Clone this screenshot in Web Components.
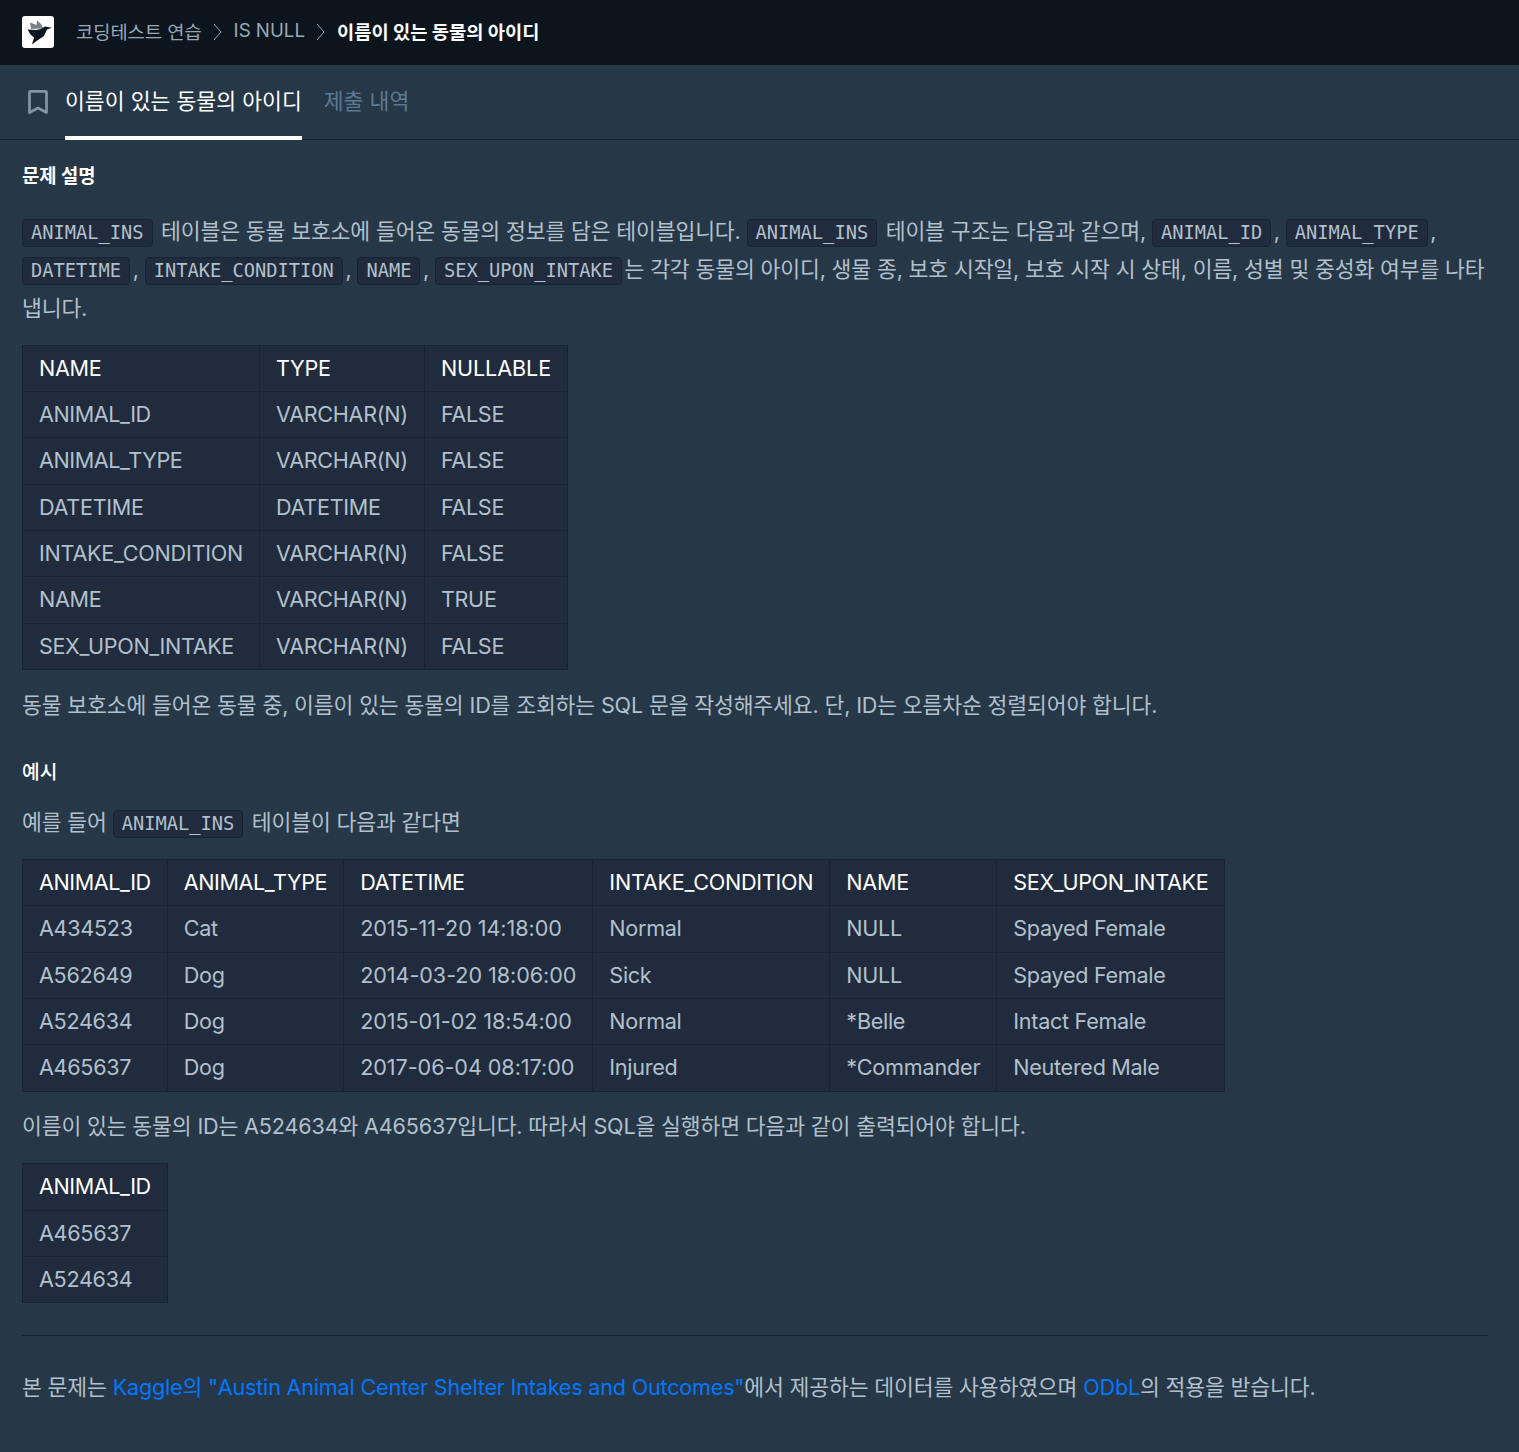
<!DOCTYPE html>
<html lang="ko">
<head>
<meta charset="utf-8">
<title>이름이 있는 동물의 아이디</title>
<style>
html, body { margin: 0; background: #263747; }
body { font-family: Inter, "Noto Sans CJK KR", sans-serif; color: #B2C0CC; }
</style>
</head>
<body>

<top-nav>
    <nav-crumb>코딩테스트 연습</nav-crumb>
    <nav-crumb>IS NULL</nav-crumb>
    <nav-crumb current>이름이 있는 동물의 아이디</nav-crumb>
</top-nav>

<tab-bar>
    <tab-item active>이름이 있는 동물의 아이디</tab-item>
    <tab-item>제출 내역</tab-item>
</tab-bar>

<guide-section>
    <section-title big>문제 설명</section-title>
    <text-para><code-chip>ANIMAL_INS</code-chip> 테이블은 동물 보호소에 들어온 동물의 정보를 담은 테이블입니다. <code-chip>ANIMAL_INS</code-chip> 테이블 구조는 다음과 같으며, <code-chip>ANIMAL_ID</code-chip>, <code-chip>ANIMAL_TYPE</code-chip>, <code-chip>DATETIME</code-chip>, <code-chip>INTAKE_CONDITION</code-chip>, <code-chip>NAME</code-chip>, <code-chip>SEX_UPON_INTAKE</code-chip>는 각각 동물의 아이디, 생물 종, 보호 시작일, 보호 시작 시 상태, 이름, 성별 및 중성화 여부를 나타<br>냅니다.</text-para>
    <data-table rows='[["NAME","TYPE","NULLABLE"],["ANIMAL_ID","VARCHAR(N)","FALSE"],["ANIMAL_TYPE","VARCHAR(N)","FALSE"],["DATETIME","DATETIME","FALSE"],["INTAKE_CONDITION","VARCHAR(N)","FALSE"],["NAME","VARCHAR(N)","TRUE"],["SEX_UPON_INTAKE","VARCHAR(N)","FALSE"]]'></data-table>
    <text-para>동물 보호소에 들어온 동물 중, 이름이 있는 동물의 ID를 조회하는 SQL 문을 작성해주세요. 단, ID는 오름차순 정렬되어야 합니다.</text-para>
    <section-title>예시</section-title>
    <text-para>예를 들어 <code-chip>ANIMAL_INS</code-chip> 테이블이 다음과 같다면</text-para>
    <data-table rows='[["ANIMAL_ID","ANIMAL_TYPE","DATETIME","INTAKE_CONDITION","NAME","SEX_UPON_INTAKE"],["A434523","Cat","2015-11-20 14:18:00","Normal","NULL","Spayed Female"],["A562649","Dog","2014-03-20 18:06:00","Sick","NULL","Spayed Female"],["A524634","Dog","2015-01-02 18:54:00","Normal","*Belle","Intact Female"],["A465637","Dog","2017-06-04 08:17:00","Injured","*Commander","Neutered Male"]]'></data-table>
    <text-para>이름이 있는 동물의 ID는 A524634와 A465637입니다. 따라서 SQL을 실행하면 다음과 같이 출력되어야 합니다.</text-para>
    <data-table rows='[["ANIMAL_ID"],["A465637"],["A524634"]]'></data-table>
    <section-rule></section-rule>
    <text-para>본 문제는 <ext-link>Kaggle의 "Austin Animal Center Shelter Intakes and Outcomes"</ext-link>에서 제공하는 데이터를 사용하였으며 <ext-link>ODbL</ext-link>의 적용을 받습니다.</text-para>
</guide-section>

<script>
'use strict';

const define = (name, css, html) => {
    customElements.define(name, class extends HTMLElement {
        constructor () {
            super();
            this.attachShadow({mode: 'open'}).innerHTML = `<style>${css}</style>${html}`;
        }
    });
};

define('top-nav', `
    :host { display: flex; align-items: center; height: 65px; padding: 0 22px 5px; background: #0C151C; box-sizing: border-box; }
    svg { flex: none; margin-right: 22px; margin-top: 3px; }
`, `
    <svg width="32" height="32" viewBox="0 0 32 32">
        <rect width="32" height="32" rx="3" fill="#fff"/>
        <path fill="#77818b" d="M8 6.500 L14.500 9 L15 4.500 L19 8 L21.500 12.500 L9 13 Z"/>
        <path fill="#0C151C" d="M5.500 13.500 L14 14 L19 13 L23 10.500 L30 11.800 L25 13.500 L22 20 L16 24 L10 28.500 L12 21.500 L8.500 18.500 Z"/>
    </svg>
    <slot></slot>
`);

define('nav-crumb', `
    :host { display: inline-flex; align-items: center; font-size: 18.7px; color: #98A8B9; }
    :host([current]) { color: #fff; font-weight: 700; }
    svg { margin: 3px 12px 0 11px; }
    :host([current]) svg { display: none; }
`, `<slot></slot><svg width="9" height="18" viewBox="0 0 9 18"><path d="M1 1 L8 9 L1 17" fill="none" stroke="#98A8B9" stroke-width="1"/></svg>`);

define('tab-bar', `
    :host { display: flex; align-items: stretch; height: 75px; padding-left: 28px; box-sizing: border-box; border-bottom: 1px solid #172334; gap: 22px; }
    svg { flex: none; align-self: center; margin: 0 -5px 1px 0; width: 20px; height: 24px; }
`, `
    <svg viewBox="0 0 20 24"><path d="M1.500 2.500 Q1.500 1.400 2.600 1.400 H17.400 Q18.500 1.400 18.500 2.500 V22.500 L10 18 L1.500 22.500 Z" fill="none" stroke="#8395A7" stroke-width="2.700" stroke-linejoin="round"/></svg>
    <slot></slot>
`);

define('tab-item', `
    :host { display: flex; align-items: center; font-size: 21.6px; color: #5C7A93; box-sizing: border-box; height: 75px; padding-bottom: 2px; border-bottom: 4px solid transparent; }
    :host([active]) { color: #fff; border-bottom-color: #fff; }
`, `<slot></slot>`);

define('guide-section', `
    :host { display: block; padding: 22.6px 31px 47px 22px; }
`, `<slot></slot>`);

define('section-title', `
    :host { display: block; font-size: 19.200px; font-weight: 500; color: #fff; line-height: 28px; margin: 33.9px 0 17px; }
    :host([big]) { margin-top: 0; margin-bottom: 21.1px; font-size: 18.8px; font-weight: 700; }
`, `<slot></slot>`);

define('text-para', `
    :host { display: block; font-size: 21.6px; line-height: 38.4px; letter-spacing: -0.16px; margin: 0 0 17.8px; }
`, `<slot></slot>`);

define('code-chip', `
    :host { display: inline-block; font-family: "DejaVu Sans Mono", monospace; font-size: 18.72px; letter-spacing: 0; line-height: 26px; color: #B2C0CC; background: #202B3D; border: 1px solid #172334; border-radius: 4px; padding: 0 8px; margin-right: 2.6px; vertical-align: baseline; }
`, `<slot></slot>`);

define('ext-link', `
    :host { color: #0078FF; letter-spacing: -0.2px; }
`, `<slot></slot>`);

define('section-rule', `
    :host { display: block; border-top: 1px solid #172334; margin: 32px 0 31.6px; }
`, ``);

// a few words run wider or narrower than the default tracking
const tracking = text => {
    if (/^\d{4}-/.test(text)) return -0.06;
    if (text === 'NULLABLE') return -0.1;
    if (text === '*Commander') return -0.2;
    if (text === 'INTAKE_CONDITION') return -0.25;
    if (text === 'SEX_UPON_INTAKE') return -0.36;
    if (/^ANIMAL_/.test(text)) return -0.42;
    return -0.3;
};

customElements.define('data-table', class extends HTMLElement {
    constructor () {
        super();
        this.attachShadow({mode: 'open'});
    }
    connectedCallback () {
        const rows = JSON.parse(this.getAttribute('rows'));
        const body = rows.map((row, i) => {
            const tag = i ? 'td' : 'th';
            return `<tr>${row.map(c => `<${tag} style="letter-spacing:${tracking(c)}px">${c}</${tag}>`).join('')}</tr>`;
        }).join('');
        this.shadowRoot.innerHTML = `<style>
            :host { display: block; margin: 0 0 15.5px; }
            table { border-collapse: collapse; background: #202B3D; font-size: 21.6px; line-height: 29.33px; }
            th, td { border: 1px solid #172334; padding: 8px 16px; text-align: left; font-weight: 400; white-space: nowrap; }
            th { color: #fff; }
        </style><table>${body}</table>`;
    }
});
</script>
</body>
</html>
